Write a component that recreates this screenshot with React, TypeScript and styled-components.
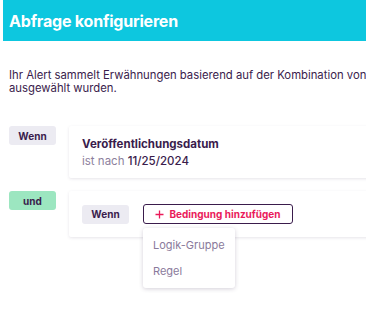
import React from 'react'
import styled, { createGlobalStyle } from 'styled-components'

const GlobalStyle = createGlobalStyle`
  body {
    margin: 0;
    padding: 0;
    background: #ffffff;
    font-family: Inter, "Noto Sans", sans-serif;
    color: #3a1c4c;
  }
`

const Viewport = styled.div`
  box-sizing: border-box;
  width: 366px;
  height: 313px;
  padding-left: 3px;
  overflow: hidden;
`

const Sheet = styled.div`
  width: 470px;
`

const Header = styled.header`
  display: flex;
  align-items: center;
  height: 41px;
  padding-left: 6px;
  background: #0dc7df;
`

const Title = styled.h1`
  margin: 0;
  font-size: 16px;
  font-weight: 700;
  color: #ffffff;
  letter-spacing: -0.2px;
`

const Content = styled.main`
  padding: 28px 0 0 6px;
`

const Intro = styled.p`
  margin: 0 0 31px;
  width: 420px;
  font-size: 11.3px;
  line-height: 13px;
  color: #3a1c4c;
`

const Row = styled.div`
  display: grid;
  grid-template-columns: 60px 1fr;
  align-items: start;
  margin-bottom: 13px;
`

const Badge = styled.span<{ $tone?: 'grey' | 'green' }>`
  display: flex;
  align-items: center;
  justify-content: center;
  width: 47px;
  height: 19px;
  border-radius: 3px;
  font-size: 10px;
  font-weight: 700;
  color: #3a1c4c;
  background: ${(p) => (p.$tone === 'green' ? '#9ce6c0' : '#ecebf2')};
`

const Card = styled.section`
  background: #ffffff;
  border-radius: 2px;
  box-shadow: 0 1px 3px rgba(60, 40, 80, 0.12);
  padding: 0 13px;
`

const RuleCard = styled(Card)`
  height: 52px;
  display: flex;
  flex-direction: column;
  justify-content: center;
  gap: 3px;
`

const RuleTitle = styled.div`
  font-size: 11.5px;
  font-weight: 700;
  color: #3a1c4c;
`

const RuleValue = styled.div`
  font-size: 11.5px;
  color: #8d7f9d;

  b {
    font-weight: 500;
    color: #3a1c4c;
  }
`

const GroupCard = styled(Card)`
  height: 46px;
  display: flex;
  align-items: center;
  gap: 14px;
`

const AddWrap = styled.div`
  position: relative;
`

const AddButton = styled.button`
  display: flex;
  align-items: center;
  justify-content: center;
  gap: 5px;
  width: 150px;
  height: 20px;
  padding: 0;
  border: 1px solid #3a1c4c;
  border-radius: 3px;
  background: #ffffff;
  font-family: inherit;
  font-size: 10px;
  font-weight: 700;
  color: #ea1a5a;
`

const Menu = styled.ul`
  position: absolute;
  top: 24px;
  left: 0;
  width: 92px;
  margin: 0;
  padding: 4px 0;
  list-style: none;
  background: #ffffff;
  border-radius: 3px;
  box-shadow: 0 1px 4px rgba(60, 40, 80, 0.22);
`

const MenuItem = styled.li`
  padding: 0 10px;
  height: 26px;
  display: flex;
  align-items: center;
  font-size: 11px;
  color: #8a7a9b;
`

export default function App() {
  return (
    <Viewport>
      <GlobalStyle />
      <Sheet>
        <Header>
          <Title>Abfrage konfigurieren</Title>
        </Header>
        <Content>
          <Intro>
            Ihr Alert sammelt Erwähnungen basierend auf der Kombination von Regeln, die
            ausgewählt wurden.
          </Intro>
          <Row>
            <Badge>Wenn</Badge>
            <RuleCard>
              <RuleTitle>Veröffentlichungsdatum</RuleTitle>
              <RuleValue>
                ist nach <b>11/25/2024</b>
              </RuleValue>
            </RuleCard>
          </Row>
          <Row>
            <Badge $tone="green">und</Badge>
            <GroupCard>
              <Badge>Wenn</Badge>
              <AddWrap>
                <AddButton>
                  <svg width="9" height="9" viewBox="0 0 9 9">
                    <path d="M4.5 0.5v8M0.5 4.5h8" stroke="#ea1a5a" strokeWidth="1.3" />
                  </svg>
                  Bedingung hinzufügen
                </AddButton>
                <Menu>
                  <MenuItem>Logik-Gruppe</MenuItem>
                  <MenuItem>Regel</MenuItem>
                </Menu>
              </AddWrap>
            </GroupCard>
          </Row>
        </Content>
      </Sheet>
    </Viewport>
  )
}
